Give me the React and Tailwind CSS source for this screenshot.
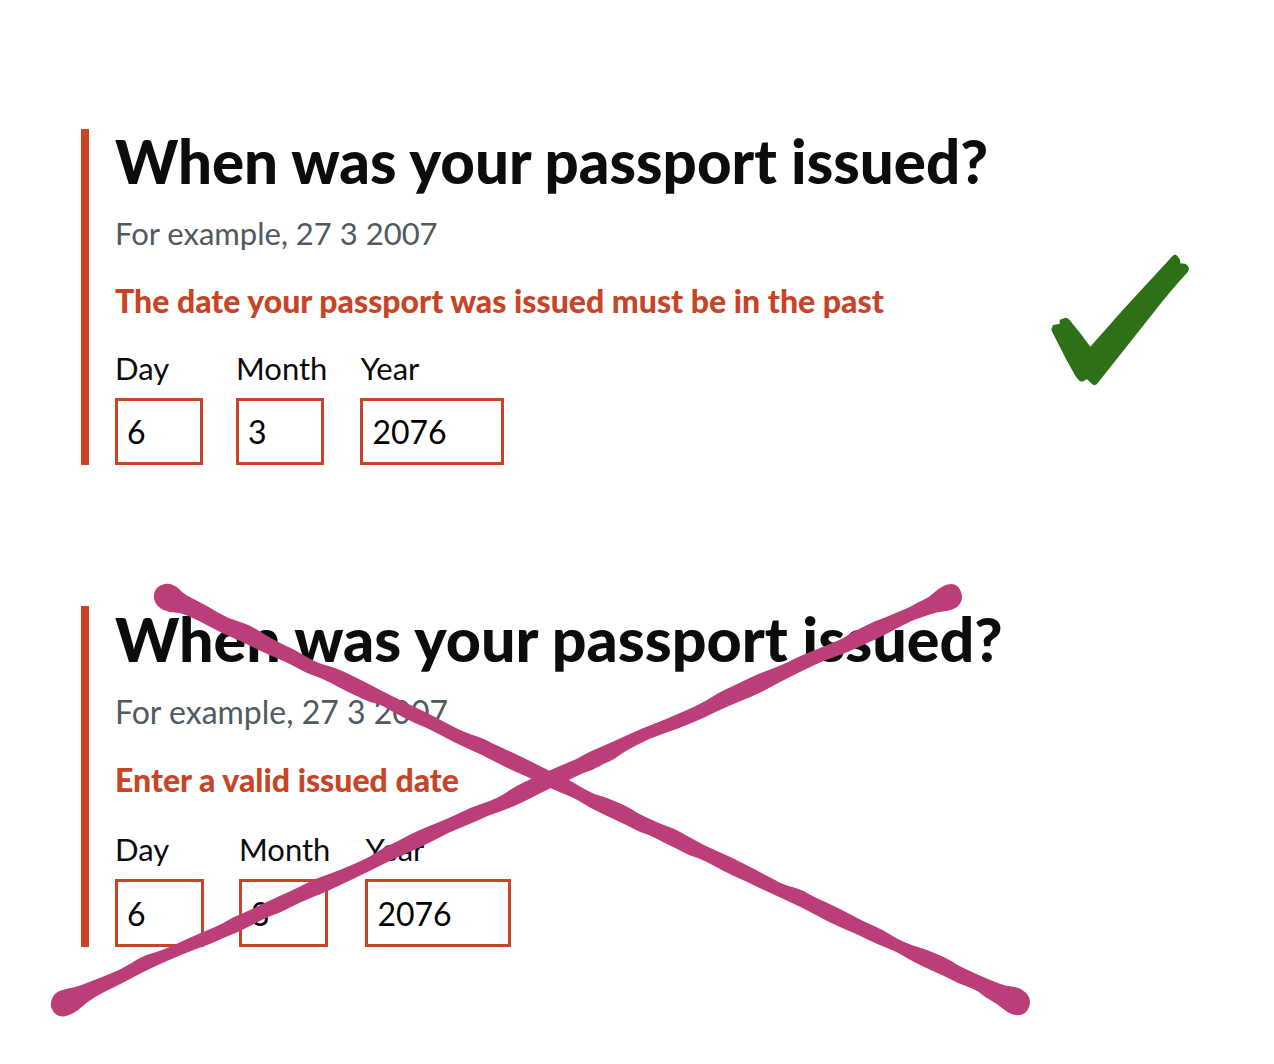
import { useId } from 'react';

const DOWN_STROKE = [
  [154, 597], [157, 588], [167, 584], [176, 587], [183, 595], [207, 607], [227, 619], [250, 626], [273, 641], [293, 650],
  [317, 664], [333, 668], [353, 677], [393, 698], [427, 714], [440, 721], [463, 733], [482, 739], [493, 745], [520, 757],
  [549, 772], [567, 780], [593, 795], [605, 798], [630, 809], [637, 814], [660, 825], [675, 830], [703, 846], [730, 858],
  [740, 863], [773, 880], [782, 885], [802, 891], [810, 896], [840, 910], [862, 922], [883, 931], [897, 940], [913, 947],
  [925, 950], [950, 961], [957, 966], [980, 977], [995, 983], [1005, 987], [1017, 988], [1026, 993], [1030, 1002],
  [1026, 1012], [1018, 1015], [1008, 1012], [998, 1003], [985, 996], [977, 989], [958, 982], [947, 976], [913, 961],
  [898, 951], [877, 943], [857, 933], [828, 921], [802, 906], [770, 892], [748, 881], [723, 870], [702, 858], [688, 854],
  [680, 849], [667, 843], [650, 834], [640, 831], [627, 824], [590, 807], [577, 798], [550, 787], [533, 778], [507, 767],
  [483, 754], [453, 741], [430, 728], [417, 723], [393, 711], [382, 704], [370, 701], [357, 695], [340, 687], [322, 677],
  [308, 673], [287, 661], [267, 653], [243, 641], [220, 631], [200, 620], [182, 612], [168, 611], [158, 606],
];

const UP_STROKE = [
  [51, 1004], [55, 994], [65, 990], [77, 988], [100, 979], [122, 970], [143, 957], [157, 953], [173, 947], [187, 940],
  [220, 926], [232, 919], [248, 912], [280, 897], [300, 888], [315, 880], [330, 875], [350, 867], [370, 858], [383, 849],
  [397, 843], [417, 832], [450, 819], [472, 808], [491, 802], [503, 796], [513, 789], [533, 779], [549, 772], [567, 764],
  [577, 760], [587, 754], [613, 743], [643, 729], [660, 723], [703, 704], [718, 694], [740, 684], [758, 675], [783, 666],
  [798, 658], [823, 648], [840, 641], [850, 635], [873, 623], [882, 620], [910, 608], [917, 604], [930, 598], [938, 590],
  [950, 584], [958, 587], [962, 597], [958, 606], [948, 610], [937, 611], [913, 619], [903, 624], [880, 636], [865, 643],
  [843, 653], [825, 659], [810, 666], [787, 677], [760, 692], [740, 700], [717, 710], [703, 717], [677, 728], [650, 737],
  [623, 751], [613, 759], [605, 762], [592, 769], [580, 773], [567, 780], [550, 787], [513, 806], [489, 814], [472, 822],
  [447, 832], [427, 843], [393, 858], [363, 873], [340, 884], [323, 892], [300, 901], [279, 912], [267, 916], [240, 930],
  [223, 937], [212, 942], [180, 954], [153, 966], [133, 976], [123, 982], [105, 990], [87, 1001], [77, 1010], [68, 1015],
  [60, 1016], [54, 1012],
];

// Closed outline whose corners are rounded between edge midpoints.
function outline(points) {
  const mid = (a, b) => [(a[0] + b[0]) / 2, (a[1] + b[1]) / 2];
  const n = points.length;
  let d = `M${mid(points[n - 1], points[0])}`;
  for (let i = 0; i < n; i++) {
    d += `Q${points[i]} ${mid(points[i], points[(i + 1) % n])}`;
  }
  return `${d}Z`;
}

function Tick() {
  return (
    <svg role="img" aria-label="Do" viewBox="62 40 414 396" className="mt-[125px] h-[132px] w-[138px] shrink-0">
      <path
        fill="#2e7017"
        d="M64 270Q62 264 66 260L67 254L88 249L88 237L106 231Q112 231 117 237Q150 276 180 318L280 205L424 49Q430 41 436 42Q442 45 445 51Q450 55 450 68L464 69Q470 71 472 76Q478 81 475 87Q472 96 464 103Q428 142 390 190L216 410Q206 423 199 431Q192 436 186 431L170 416Q163 418 160 422Q153 424 147 420Q140 414 134 404L107 355Z"
      />
    </svg>
  );
}

function Cross() {
  return (
    <svg
      role="img"
      aria-label="Do not"
      viewBox="50 582 982 436"
      className="pointer-events-none absolute -top-[24px] -left-[31px] h-[436px] w-[982px] max-w-none"
      fill="#bc3e79"
      stroke="#bc3e79"
      strokeWidth="2"
      strokeLinejoin="round"
    >
      <path d={outline(DOWN_STROKE)} />
      <path d={outline(UP_STROKE)} />
    </svg>
  );
}

function DatePart({ label, value, inputClass }) {
  const id = useId();
  return (
    <div className="flex flex-col items-start">
      <label htmlFor={id} className="text-[31px] leading-[40px]">{label}</label>
      <input
        id={id}
        type="text"
        inputMode="numeric"
        defaultValue={value}
        className={`mt-[10px] border-[3px] border-[#c84427] bg-white pl-[9px] text-[32px] text-black outline-none ${inputClass}`}
      />
    </div>
  );
}

export default function App() {
  return (
    <main className="min-h-screen overflow-x-hidden bg-white px-[81px] pt-[129px] pb-[116px] font-['Lato',sans-serif] text-[#0b0c0c]">
      <section className="flex items-start justify-between pr-1">
        <div className="border-l-8 border-[#c84427] pl-[26px]">
          <fieldset>
            <legend className="text-[60px] leading-[64px] font-black">When was your passport issued?</legend>
            <p className="mt-[20px] text-[31px] leading-[40px] text-[#505a5f]">For example, 27 3 2007</p>
            <p className="mt-[28px] text-[32px] leading-[40px] font-black text-[#c84427]">
              The date your passport was issued must be in the past
            </p>
            <div className="mt-[27px] flex gap-[33px]">
              <DatePart label="Day" value="6" inputClass="h-[67px] w-[88px]" />
              <DatePart label="Month" value="3" inputClass="h-[67px] w-[88px]" />
              <DatePart label="Year" value="2076" inputClass="h-[67px] w-[144px]" />
            </div>
          </fieldset>
        </div>
        <Tick />
      </section>

      <section className="relative mt-[141px]">
        <div className="border-l-8 border-[#c84427] pl-[26px]">
          <fieldset>
            <legend className="text-[61px] leading-[66px] font-black">When was your passport issued?</legend>
            <p className="mt-[20px] text-[32px] leading-[40px] text-[#505a5f]">For example, 27 3 2007</p>
            <p className="mt-[28px] text-[32px] leading-[40px] font-black text-[#c84427]">Enter a valid issued date</p>
            <div className="mt-[29px] flex gap-[35px]">
              <DatePart label="Day" value="6" inputClass="h-[68px] w-[89px]" />
              <DatePart label="Month" value="3" inputClass="h-[68px] w-[89px]" />
              <DatePart label="Year" value="2076" inputClass="h-[68px] w-[146px]" />
            </div>
          </fieldset>
        </div>
        <Cross />
      </section>
    </main>
  );
}
